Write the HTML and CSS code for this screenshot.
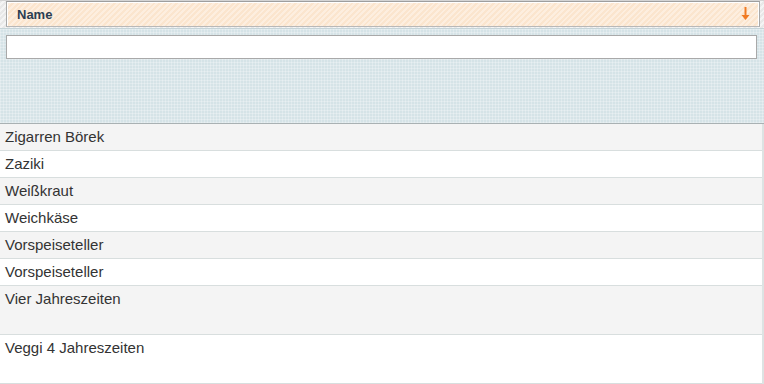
FILE: index.html
```html
<!DOCTYPE html>
<html>
<head>
    <meta http-equiv="Content-Type" content="text/html; charset=UTF-8">
    <title>Speisen</title>
    <link rel="stylesheet" href="styles.css">
</head>
<body>
<div class="grid">
    <div class="head">
        <div class="head-cell">
            <span class="head-title">Name</span>
            <svg class="sort" width="9" height="14" viewBox="0 0 9 14">
                <path d="M4.5 0 V11" stroke="#f07a22" stroke-width="2"/>
                <path d="M0.5 8 L4.5 13 L8.5 8 Z" fill="#f07a22"/>
            </svg>
        </div>
    </div>
    <div class="filter">
        <input type="text" class="filter-input">
    </div>
    <div class="rows">
        <div class="row odd">Zigarren Börek</div>
        <div class="row">Zaziki</div>
        <div class="row odd">Weißkraut</div>
        <div class="row">Weichkäse</div>
        <div class="row odd">Vorspeiseteller</div>
        <div class="row">Vorspeiseteller</div>
        <div class="row odd tall">Vier Jahreszeiten</div>
        <div class="row tall">Veggi 4 Jahreszeiten</div>
    </div>
</div>
</body>
</html>
```

FILE: styles.css
```css
body {
    margin: 0;
    font-family: Arial, "Liberation Sans", sans-serif;
    background: #ffffff;
}

.grid {
    width: 764px;
}

.head {
    height: 28px;
    padding: 0 4px 0 6px;
    background: repeating-linear-gradient(135deg, #e8e8e8 0 2px, #f4f4f4 2px 4px);
    box-sizing: border-box;
    border-top: 1px solid #d4d4d4;
}

.head-cell {
    display: flex;
    align-items: center;
    height: 26px;
    box-sizing: border-box;
    border-left: 1px solid #a8a8a8;
    border-right: 1px solid #a8a8a8;
    border-top: 1px solid #9e9e9e;
    border-bottom: 1px solid #b8b8b8;
    box-shadow: inset 1px 1px 0 #ffffff, inset -1px 0 0 #ffffff;
    background: repeating-linear-gradient(135deg, #fbe5ce 0 2px, #fdeedf 2px 4px);
    padding: 0 9px 0 10px;
}

.head-title {
    flex: 1;
    font-size: 13px;
    font-weight: bold;
    color: #2b3e52;
}

.sort {
    display: block;
}

.filter {
    height: 96px;
    box-sizing: border-box;
    padding: 6px 6px 0 6px;
    border-top: 1px solid #c6d4d8;
    border-bottom: 1px solid #a9b1b3;
    background-color: #d5e3e7;
    background-image:
        linear-gradient(90deg, rgba(255,255,255,0.25) 1px, transparent 1px),
        linear-gradient(rgba(255,255,255,0.25) 1px, transparent 1px);
    background-size: 3px 3px;
}

.filter-input {
    display: block;
    width: 751px;
    height: 24px;
    box-sizing: border-box;
    margin: 0;
    border: 1px solid #a9a9a9;
    background: #ffffff;
}

.rows {
    border-right: 2px solid #dde3e3;
}

.row {
    height: 27px;
    box-sizing: border-box;
    padding: 4px 5px 0 5px;
    border-bottom: 1px solid #d8dede;
    font-size: 15px;
    color: #333333;
    background: #ffffff;
}

.row.odd {
    background: #f4f4f4;
}

.row.tall {
    height: 49px;
}
```
